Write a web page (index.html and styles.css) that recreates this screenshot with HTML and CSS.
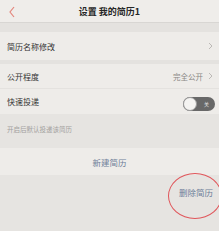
FILE: index.html
```html
<!DOCTYPE html>
<html lang="zh">
<head>
<meta charset="utf-8">
<link rel="stylesheet" href="styles.css">
</head>
<body>
<div class="page">
  <header class="nav">
    <svg class="back" width="8" height="12" viewBox="0 0 8 12"><polyline points="6,1 2,6 6,11" fill="none" stroke="#e4867c" stroke-width="1.2"/></svg>
    <div class="title">设置 我的简历1</div>
  </header>
  <div class="gap g1"></div>
  <div class="row r1">
    <span class="label">简历名称修改</span>
    <svg class="chev" width="5" height="8" viewBox="0 0 5 8"><polyline points="1,1 4,4 1,7" fill="none" stroke="#b5b3b0" stroke-width="0.9"/></svg>
  </div>
  <div class="gap g2"></div>
  <div class="row r2">
    <span class="label">公开程度</span>
    <span class="right"><span class="value">完全公开</span>
    <svg class="chev" width="5" height="8" viewBox="0 0 5 8"><polyline points="1,1 4,4 1,7" fill="none" stroke="#b5b3b0" stroke-width="0.9"/></svg></span>
  </div>
  <div class="row r3">
    <span class="label">快速投递</span>
    <span class="toggle"><span class="knob"></span><span class="off">关</span></span>
  </div>
  <div class="hint">开启后默认投递该简历</div>
  <div class="btn-row">新建简历</div>
  <div class="bottom">
    <span class="del">删除简历<span class="circle"></span></span>
  </div>
</div>
</body>
</html>
```
FILE: styles.css
```css
html, body { margin: 0; padding: 0; }
body {
  width: 219px;
  height: 231px;
  overflow: hidden;
  background: #e6e4e1;
  font-family: "Noto Sans CJK SC", "Noto Sans", sans-serif;
  color: #2e2e2e;
}
.page { display: flex; flex-direction: column; height: 231px; }
.nav {
  height: 22px;
  background: #efedea;
  border-bottom: 1px solid #d8d6d3;
  display: flex;
  align-items: center;
  justify-content: center;
  position: relative;
}
.back { position: absolute; left: 8px; top: 6px; }
.title { font-size: 9px; font-weight: 700; color: #262626; margin-top: 1px; }
.gap { background: #e4e2df; }
.g1 { height: 9px; }
.g2 { height: 4px; }
.row {
  background: #eeece9;
  display: flex;
  align-items: center;
  justify-content: space-between;
  padding: 0 6px 0 7px;
}
.r1 { height: 28px; }
.r2 { height: 24px; border-bottom: 1px solid #e4e2df; }
.r3 { height: 25px; padding-right: 4px; }
.label { font-size: 8px; color: #333; }
.right { display: flex; align-items: center; gap: 5px; }
.value { font-size: 7.5px; color: #8a8885; }
.toggle {
  width: 32px;
  height: 14px;
  border-radius: 7px;
  background: #686868;
  display: flex;
  align-items: center;
  justify-content: space-between;
  margin-top: 4px;
  box-sizing: border-box;
}
.knob {
  width: 14px;
  height: 14px;
  border-radius: 50%;
  background: #f4f3f1;
  box-sizing: border-box;
  border: 1px solid #9a9a9a;
}
.off { font-size: 5px; color: #e8e8e8; margin-right: 6px; }
.hint {
  height: 34px;
  box-sizing: border-box;
  padding: 10px 0 0 7px;
  font-size: 6.5px;
  color: #a3a19e;
}
.btn-row {
  height: 27px;
  background: #eeece9;
  display: flex;
  align-items: center;
  justify-content: center;
  font-size: 8.5px;
  color: #6e8099;
}
.bottom {
  flex: 1;
  display: flex;
  justify-content: flex-end;
  padding: 11px 6px 0 0;
}
.del { font-size: 8.5px; color: #6e8099; position: relative; height: 12px; line-height: 12px; }
.circle {
  position: absolute;
  left: -11px;
  top: -13px;
  width: 54px;
  height: 46px;
  border: 1px solid #e0555a;
  border-radius: 50%;
  box-sizing: border-box;
}
```
